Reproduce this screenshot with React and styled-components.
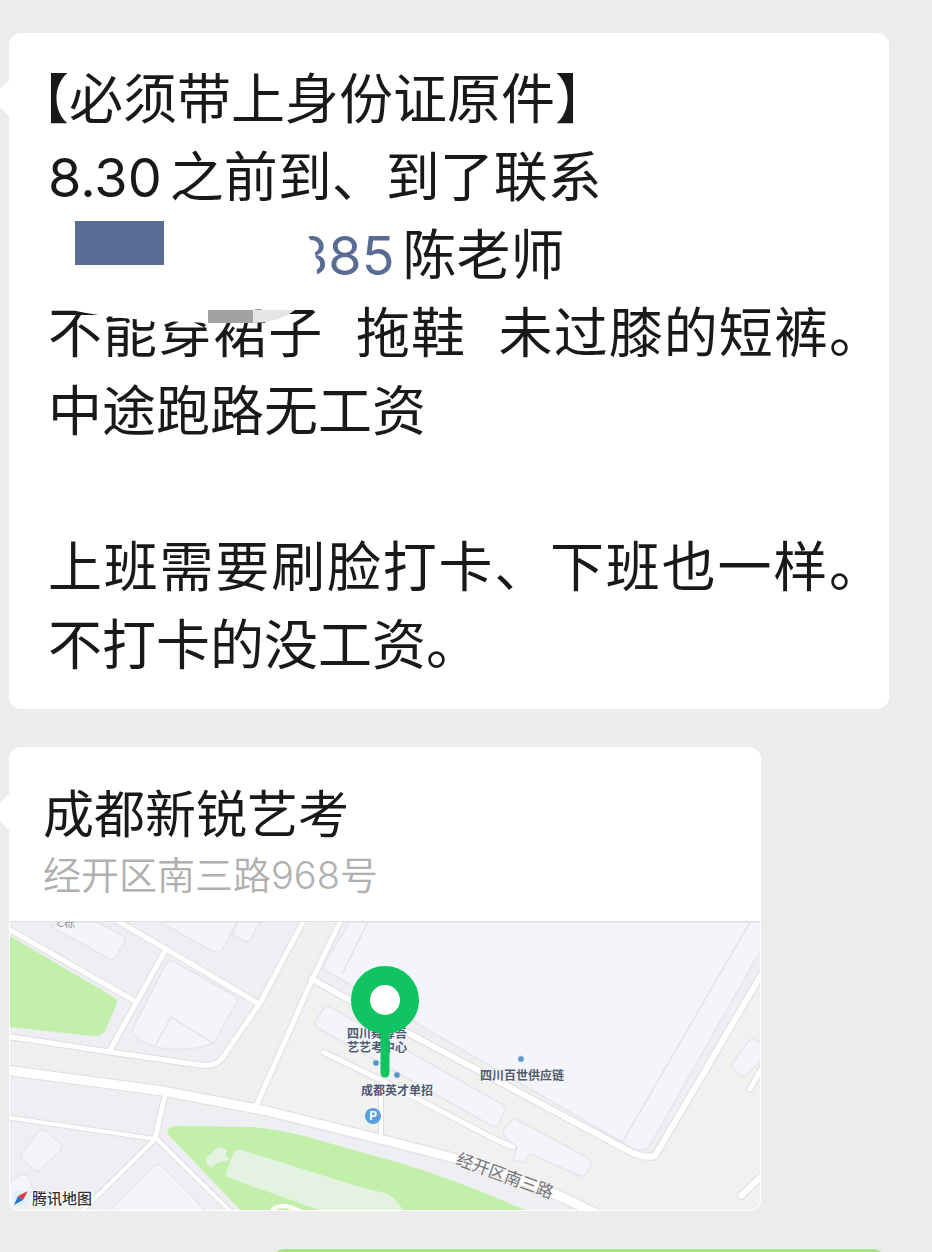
import React from "react";
import styled, { createGlobalStyle } from "styled-components";

const COLORS = {
  page: "#ececec",
  bubble: "#ffffff",
  sent: "#a6e286",
  text: "#191919",
  link: "#5a6c94",
  subText: "#b0b0b0",
  line: "#dfdfe3",
  pin: "#10c461",
};

const GlobalStyle = createGlobalStyle`
* { box-sizing: border-box; }

body {
  margin: 0;
  background: ${COLORS.page};
  color: ${COLORS.text};
  font-family: Inter, "Noto Sans CJK SC", sans-serif;
}
`;

const Chat = styled.main`
display: flex;
flex-direction: column;
align-items: flex-start;
gap: 38px;
height: 100vh;
padding: 33px 43px 0 9px;
overflow: hidden;
`;

const Bubble = styled.article`
position: relative;
flex-shrink: 0;
width: 100%;
max-width: ${props => props.$max || "none"};
background: ${COLORS.bubble};
border-radius: 12px;

&::before {
  content: "";
  position: absolute;
  top: 52px;
  left: -13px;
  width: 26px;
  height: 26px;
  border-radius: 3px;
  background: ${COLORS.bubble};
  transform: rotate(45deg);
}
`;

const Message = styled.div`
position: relative;
padding: 28px 6px 24px 39px;
font-size: 54px;
line-height: 78px;
`;

const Line = styled.p`
margin: 0;
min-height: 78px;
white-space: pre-wrap;
text-align: justify;
text-spacing-trim: ${props => props.$hang ? "trim-start" : "space-all"};
text-indent: ${props => props.$hang ? "-6px" : "0"};
`;

const ContactLine = styled(Line)`
padding-left: 247px;
`;

const Time = styled.time`
margin-right: 8px;
`;

const Phone = styled.a`
margin-right: 8px;
color: ${COLORS.link};
text-decoration: none;
`;

const Smudge = styled.svg`
position: absolute;
top: 172px;
left: 41px;
width: 280px;
height: 120px;
`;

const PlaceHeader = styled.header`
position: relative;
padding: 38px 34px 18px;
border-bottom: 1px solid ${COLORS.line};
`;

const PlaceName = styled.h2`
margin: 0;
font-size: 51px;
font-weight: 400;
line-height: 60px;
`;

const PlaceAddress = styled.p`
margin: 2px 0 0;
color: ${COLORS.subText};
font-size: 38px;
font-weight: 350;
line-height: 56px;
`;

const MapSvg = styled.svg`
display: block;
width: 100%;
border: 1px solid ${COLORS.bubble};
border-top: 0;
border-radius: 0 0 12px 12px;
font-family: "Noto Sans CJK SC", sans-serif;
`;

const SentRow = styled.div`
display: flex;
flex-shrink: 0;
align-self: stretch;
justify-content: flex-end;
margin-right: 4px;
`;

const SentBubble = styled.div`
width: 70%;
height: 120px;
border-radius: 12px;
background: ${COLORS.sent};
`;

const ROADS = [
  { d: "M5 927 L133 1000", w: 5 },
  { d: "M116 920 L166 949 L259 1004", w: 5 },
  { d: "M166 949 L110 1050", w: 5 },
  { d: "M5 1036 L110 1052 L200 1065 Q217 1067 223 1057 L260 1003 L304 920", w: 5 },
  { d: "M341 920 L312 980 L257 1104", w: 5 },
  { d: "M312 979 L410 1034 L627 1150 Q643 1159 655 1156 L764 970", w: 6 },
  { d: "M323 1052 L383 1081 L487 1135 Q500 1142 513 1147", w: 5 },
  { d: "M381 1082 L381 1137", w: 4 },
  { d: "M165 1095 L155 1139", w: 5 },
  { d: "M5 1117 L155 1139 L80 1213", w: 4 },
  { d: "M155 1137 L232 1213", w: 4 },
  { d: "M741 1196 L766 1172", w: 6 },
  { d: "M750 1089 L762 1068", w: 5 },
  { d: "M5 1070 L163 1091 L267 1111 L400 1144 L465 1161 Q530 1180 595 1213", w: 9 },
];

const BUILDINGS = [
  "M62 922 L97 922 L123 936 Q127 939 124 943 L116 957 Q113 961 108 958 L50 926Z",
  "M160 922 L237 922 L222 950 Q218 954 212 951Z",
  "M237 922 L260 922 L250 940 Q248 943 244 941 L233 935Z",
  "M173 961 L235 996 Q239 999 236 1003 L214 1043 Q180 1055 150 1045 Q130 1037 133 1028 L166 964 Q169 960 173 961Z",
  "M350 922 L762 922 L762 948 L650 1145 Q644 1153 632 1148 L325 970 Q322 968 325 963Z",
  "M330 1007 L500 1103 Q506 1107 504 1111 L499 1124 Q496 1128 490 1125 L318 1028 Q314 1025 316 1021 L323 1009 Q326 1005 330 1007Z",
  "M514 1118 L588 1158 Q593 1162 590 1167 L586 1174 Q583 1178 578 1175 L530 1154 L524 1163 L513 1160 L517 1148 L506 1138 Q502 1133 504 1129Z",
  "M749 1041 Q751 1038 755 1040 L762 1043 L762 1060 L748 1074 Q746 1077 741 1075 L733 1069 Q730 1066 733 1062Z",
  "M38 1132 Q43 1128 47 1132 L60 1143 Q64 1147 60 1151 L41 1169 Q37 1173 33 1169 L23 1160 Q20 1156 23 1152Z",
  "M153 1167 Q158 1162 163 1167 L207 1212 L108 1212Z",
  "M8 1184 L20 1175 Q25 1172 29 1177 L33 1190 L8 1212Z",
];

function MapView() {
  return (
    <MapSvg viewBox="10 922 750 288" role="img" aria-label="经开区南三路地图">
      <rect x="10" y="922" width="750" height="288" fill="#eeeff2" />
      <path d="M304 920 L341 920 L312 980 L764 1200 L764 1215 L590 1213 L400 1144 L10 1070 L10 1036 L215 1066Z" fill="#efefee" />
      <path d="M312 980 L655 1157 L762 970 L762 1212 L590 1212 L400 1144 L257 1108Z" fill="#f1f1f0" />
      <path d="M10 936 L112 996 Q119 1000 116 1006 L106 1029 Q103 1037 93 1036 L10 1027Z" fill="#c2f0aa" />
      <path d="M168 1134 Q165 1126 178 1126 L253 1127 Q290 1131 325 1142 L400 1163 Q460 1181 527 1211 L241 1211Z" fill="#c2f0aa" />
      <path d="M234 1151 Q238 1148 245 1151 L363 1188 L385 1193 Q398 1199 403 1211 L322 1211 L227 1177 Q225 1175 228 1168Z" fill="#e4f3e1" />
      <path d="M206 1158 L217 1148 Q220 1146 227 1150 L226 1156 L230 1160 L217 1163 L212 1167 Q205 1166 206 1158Z" fill="#e4f3e1" />
      {BUILDINGS.map(d => (
        <path key={d} d={d} fill="#f4f5fa" stroke="#e5e6eb" strokeWidth="1.5" />
      ))}
      <path
        d="M368 922 L342 974 M750 922 L623 1141 M213 1043 L171 1017 L155 1046"
        fill="none"
        stroke="#e3e4e8"
        strokeWidth="1.5"
      />
      <g fill="none" strokeLinecap="round" strokeLinejoin="round">
        {ROADS.map(road => (
          <path key={road.d} d={road.d} stroke="#dedee2" strokeWidth={road.w + 2} />
        ))}
        {ROADS.map(road => (
          <path key={road.d} d={road.d} stroke="#ffffff" strokeWidth={road.w} />
        ))}
        <path d="M273 1209 Q283 1202 300 1211" stroke="#ffffff" strokeWidth="4" />
      </g>

      <text x="57" y="927" fontSize="11" fill="#8f939c">C栋</text>
      <g fontSize="12" fontWeight="700" fill="#515b70" stroke="#f4f5fa" strokeWidth="2" paintOrder="stroke">
        <text x="347" y="1038">四川舞尊吾</text>
        <text x="347" y="1052">艺艺考中心</text>
        <text x="361" y="1095">成都英才单招</text>
        <text x="480" y="1080">四川百世供应链</text>
      </g>
      <text fontSize="17" fill="#77777a" stroke="#f1f1f0" strokeWidth="2" paintOrder="stroke" transform="translate(455 1164) rotate(20)">
        经开区南三路
      </text>

      <g fill="#5b93c8" stroke="#a9c3de" strokeWidth="1">
        <circle cx="376" cy="1063" r="3" />
        <circle cx="397" cy="1075" r="3" />
        <circle cx="521" cy="1059" r="3" />
      </g>
      <circle cx="373" cy="1116" r="8" fill="#5a9edb" />
      <text x="373" y="1120" fontSize="12" fontWeight="700" fill="#ffffff" textAnchor="middle">P</text>

      <path d="M385 1030 V1073" stroke={COLORS.pin} strokeWidth="9" strokeLinecap="round" />
      <circle cx="385" cy="1000" r="24.5" fill="#ffffff" stroke={COLORS.pin} strokeWidth="19" />

      <circle cx="21" cy="1198" r="8" fill="#dff0fc" />
      <path d="M28 1191 L23 1200 L18 1196Z" fill="#e0393e" />
      <path d="M14 1205 L18 1196 L23 1200Z" fill="#2f6fc0" />
      <text x="32" y="1204" fontSize="15" fontWeight="500" fill="#333333" stroke="#ffffff" strokeWidth="2" paintOrder="stroke">
        腾讯地图
      </text>
    </MapSvg>
  );
}

export default function App() {
  return (
    <>
      <GlobalStyle />
      <Chat lang="zh-CN">
        <Bubble>
          <Message>
            <Line $hang>【必须带上身份证原件】</Line>
            <Line><Time>8.30</Time>之前到、到了联系</Line>
            <ContactLine><Phone href="tel:385">385</Phone>陈老师</ContactLine>
            <Line>不能穿裙子  拖鞋  未过膝的短裤。中途跑路无工资</Line>
            <Line />
            <Line>上班需要刷脸打卡、下班也一样。不打卡的没工资。</Line>
            <Smudge viewBox="50 205 280 120" aria-hidden="true">
              <path d="M60 210 L296 210 L308 236 Q317 248 317 276 L300 300 L253 310 L208 323 L160 321 Q110 318 76 311Z" fill="#ffffff" />
              <rect x="75" y="221" width="89" height="44" fill={COLORS.link} />
              <path d="M253 310 L295 310 Q280 322 253 323Z" fill="#e5e5e5" />
              <rect x="208" y="310" width="45" height="13" fill="#a2a2a2" />
            </Smudge>
          </Message>
        </Bubble>

        <Bubble $max="752px">
          <PlaceHeader>
            <PlaceName>成都新锐艺考</PlaceName>
            <PlaceAddress>经开区南三路968号</PlaceAddress>
          </PlaceHeader>
          <MapView />
        </Bubble>

        <SentRow>
          <SentBubble />
        </SentRow>
      </Chat>
    </>
  );
}
